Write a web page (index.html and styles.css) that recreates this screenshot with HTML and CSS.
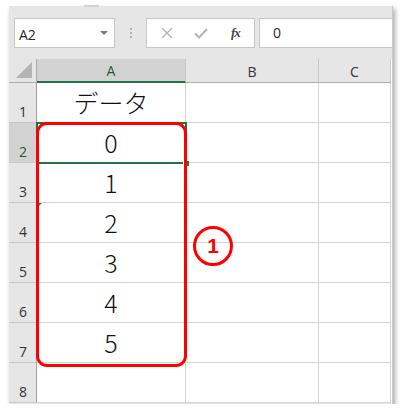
FILE: index.html
```html
<!DOCTYPE html>
<html lang="ja">
<head>
<meta charset="utf-8">
<title>Excel</title>
<link rel="stylesheet" href="styles.css">
</head>
<body>
<div class="window">
  <div class="tab"></div>
  <div class="toolbar">
    <div class="namebox">
      <span class="ref">A2</span>
      <span class="caret"></span>
    </div>
    <div class="dots"><i></i><i></i><i></i></div>
    <div class="fxbtns">
      <svg class="ico" width="14" height="14" viewBox="0 0 14 14"><path d="M2 2 L12 12 M12 2 L2 12" stroke="#b4b4b4" stroke-width="1.4" fill="none"/></svg>
      <svg class="ico" width="16" height="14" viewBox="0 0 16 14"><path d="M2 7.5 L6 11.5 L14 3" stroke="#b4b4b4" stroke-width="2" fill="none"/></svg>
      <span class="fx">fx</span>
    </div>
    <div class="fxinput">0</div>
  </div>
  <div class="sheet">
    <div class="corner"><svg width="16" height="16" viewBox="0 0 16 16"><polygon points="16,0 16,16 0,16" fill="#b4b4b4"/></svg></div>
    <div class="colhead active">A</div>
    <div class="colhead">B</div>
    <div class="colhead">C</div>

    <div class="rowhead">1</div><div class="cell">データ</div><div class="cell"></div><div class="cell"></div>
    <div class="rowhead active">2</div><div class="cell">0</div><div class="cell"></div><div class="cell"></div>
    <div class="rowhead">3</div><div class="cell">1</div><div class="cell"></div><div class="cell"></div>
    <div class="rowhead">4</div><div class="cell flag">2</div><div class="cell"></div><div class="cell"></div>
    <div class="rowhead">5</div><div class="cell">3</div><div class="cell"></div><div class="cell"></div>
    <div class="rowhead">6</div><div class="cell">4</div><div class="cell"></div><div class="cell"></div>
    <div class="rowhead">7</div><div class="cell">5</div><div class="cell"></div><div class="cell"></div>
    <div class="rowhead">8</div><div class="cell"></div><div class="cell"></div><div class="cell"></div>

    <div class="selection"><span class="handle"></span></div>
    <div class="redbox"></div>
    <div class="badge">1</div>
  </div>
</div>
</body>
</html>
```
FILE: styles.css
```css
html, body {
  margin: 0;
  padding: 0;
  background: #ffffff;
}
body {
  font-family: "Open Sans", "Noto Sans", "Liberation Sans", sans-serif;
}
.window {
  position: relative;
  margin: 6px 0 0 9px;
  width: 384px;
  height: 398px;
  background: #e6e6e6;
  box-shadow: 2px 3px 5px rgba(0, 0, 0, 0.35);
  overflow: visible;
  box-sizing: border-box;
  border-right: 1px solid #c8c8c8;
}
.tab {
  position: absolute;
  left: 75px;
  top: -1px;
  width: 15px;
  height: 2px;
  background: #d2d2d2;
}
.toolbar {
  height: 53px;
  display: flex;
  align-items: flex-start;
  padding: 12px 0 0 5px;
  box-sizing: border-box;
  overflow: hidden;
}
.namebox {
  width: 101px;
  height: 30px;
  box-sizing: border-box;
  background: #fff;
  border: 1px solid #c6c6c6;
  display: flex;
  align-items: center;
  justify-content: space-between;
  padding: 2px 6px 0 4px;
}
.ref {
  font-size: 14px;
  color: #262626;
}
.caret {
  width: 0;
  height: 0;
  border-left: 4px solid transparent;
  border-right: 4px solid transparent;
  border-top: 4px solid #7a7a7a;
  margin-bottom: 2px;
}
.dots {
  width: 31px;
  height: 30px;
  display: flex;
  flex-direction: column;
  align-items: center;
  justify-content: center;
  gap: 2px;
}
.dots i {
  width: 2px;
  height: 2px;
  background: #b0b0b0;
}
.fxbtns {
  width: 109px;
  height: 30px;
  box-sizing: border-box;
  background: #fff;
  border: 1px solid #c6c6c6;
  display: flex;
  align-items: center;
  padding: 0 0 0 13px;
  gap: 19px;
}
.fx {
  font-family: "Liberation Serif", "DejaVu Serif", serif;
  font-style: italic;
  font-weight: bold;
  font-size: 13px;
  color: #444;
  margin-left: 3px;
  letter-spacing: -1px;
}
.fxinput {
  flex: 1;
  margin-left: 4px;
  height: 30px;
  box-sizing: border-box;
  background: #fff;
  border: 1px solid #c6c6c6;
  border-right: none;
  font-size: 14px;
  color: #262626;
  padding: 4px 0 0 13px;
}
.sheet {
  position: relative;
  display: grid;
  grid-template-columns: 28px 149px 133px 72px;
  grid-template-rows: 24px repeat(8, 40px);
  background: #fff;
  width: 383px;
}
.corner {
  background: #e6e6e6;
  border-right: 1px solid #ababab;
  border-bottom: 1px solid #ababab;
  box-sizing: border-box;
  display: flex;
  align-items: flex-end;
  justify-content: flex-end;
  padding: 0 4px 4px 0;
}
.colhead {
  background: #e6e6e6;
  border-right: 1px solid #c8c8c8;
  border-bottom: 1px solid #ababab;
  box-sizing: border-box;
  display: flex;
  align-items: center;
  justify-content: center;
  font-size: 14px;
  color: #333;
  padding-top: 1px;
}
.colhead.active {
  background: #d2d2d2;
  color: #1f5a39;
  border-bottom: 2px solid #217346;
}
.rowhead {
  background: #e6e6e6;
  border-right: 1px solid #9e9e9e;
  border-bottom: 1px solid #c8c8c8;
  box-sizing: border-box;
  display: flex;
  align-items: flex-end;
  justify-content: center;
  font-size: 14px;
  color: #333;
  padding-bottom: 1px;
  padding-left: 1px;
}
.rowhead.active {
  background: #d2d2d2;
  color: #1f5a39;
}
.cell {
  position: relative;
  border-right: 1px solid #d4d4d4;
  border-bottom: 1px solid #d4d4d4;
  box-sizing: border-box;
  display: flex;
  align-items: center;
  justify-content: center;
  font-family: "Noto Sans CJK JP", "Noto Sans", sans-serif;
  font-weight: 300;
  font-size: 25px;
  color: #111;
  line-height: 1;
}
.cell.flag::before {
  content: "";
  position: absolute;
  left: 0;
  top: 0;
  border-top: 5px solid #1e8c3a;
  border-right: 5px solid transparent;
}
.selection {
  position: absolute;
  left: 27px;
  top: 63px;
  width: 151px;
  height: 42px;
  box-sizing: border-box;
  border: 2px solid #217346;
}
.handle {
  position: absolute;
  right: -4px;
  bottom: -4px;
  width: 5px;
  height: 5px;
  background: #217346;
  border-left: 1px solid #fff;
  border-top: 1px solid #fff;
}
.redbox {
  position: absolute;
  left: 27px;
  top: 63px;
  width: 151px;
  height: 245px;
  box-sizing: border-box;
  border: 3px solid #ff0000;
  border-radius: 11px;
}
.badge {
  position: absolute;
  left: 184px;
  top: 167px;
  width: 40px;
  height: 40px;
  box-sizing: border-box;
  border: 3px solid #ff0000;
  border-radius: 50%;
  display: flex;
  align-items: center;
  justify-content: center;
  font-family: "Liberation Sans", Arial, sans-serif;
  font-weight: bold;
  font-size: 21px;
  color: #ff0000;
}
```
